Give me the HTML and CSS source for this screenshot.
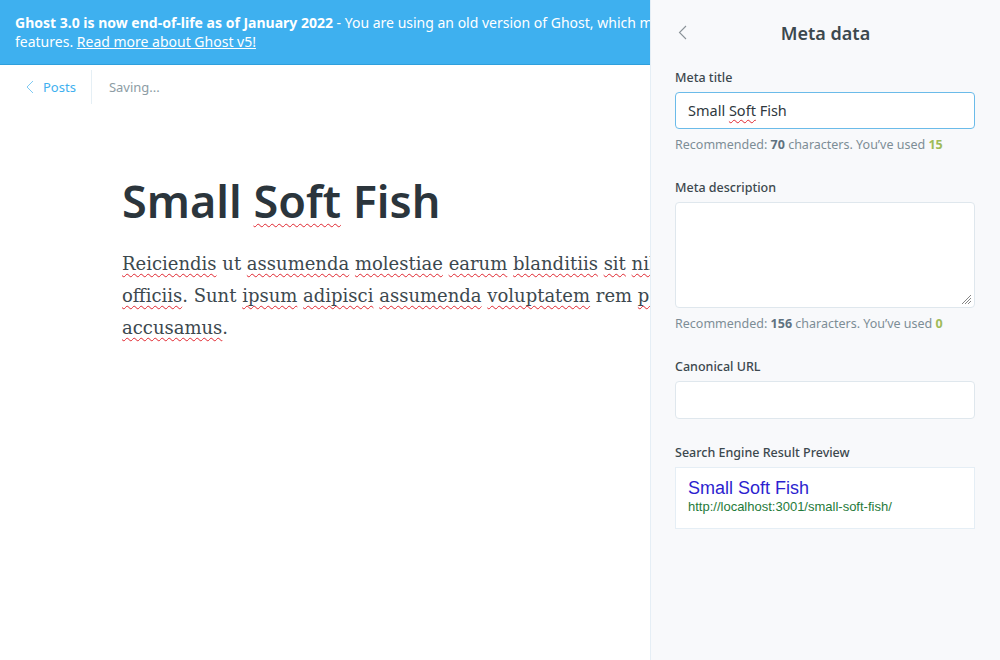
FILE: index.html
```html
<!DOCTYPE html>
<html>
<head>
<meta charset="utf-8">
<link rel="stylesheet" href="styles.css">
</head>
<body>
<div class="app">
  <div class="banner">
    <div class="banner-text">
      <strong>Ghost 3.0 is now end-of-life as of January 2022</strong> - You are using an old version of Ghost, which means<br>features. <a href="#">Read more about Ghost v5!</a>
    </div>
  </div>
  <div class="main">
    <div class="nav">
      <a class="back" href="#">
        <svg width="8" height="14" viewBox="0 0 8 14"><path d="M7 1 1 7l6 6" fill="none" stroke="currentColor" stroke-width="1"/></svg>
        Posts
      </a>
      <span class="status">Saving...</span>
    </div>
    <div class="editor">
      <h1 class="title">Small <span class="sp">Soft</span> Fish</h1>
      <p class="body"><span class="sp">Reiciendis</span> ut <span class="sp">assumenda</span> <span class="sp">molestiae</span> <span class="sp">earum</span> <span class="sp">blanditiis</span> <span class="sp">sit</span> <span class="sp">nihil</span><br><span class="sp">officiis</span>. Sunt <span class="sp">ipsum</span> <span class="sp">adipisci</span> <span class="sp">assumenda</span> <span class="sp">voluptatem</span> rem <span class="sp">perferendis</span><br><span class="sp">accusamus</span>.</p>
    </div>
  </div>

  <aside class="panel">
    <div class="panel-head">
      <button class="panel-back" type="button">
        <svg width="9" height="15" viewBox="0 0 9 15"><path d="M8 1 1.5 7.5 8 14" fill="none" stroke="currentColor" stroke-width="1.1"/></svg>
      </button>
      <h2>Meta data</h2>
    </div>
    <div class="panel-body">
      <div class="field">
        <label>Meta title</label>
        <div class="input focus">Small <span class="sp">Soft</span> Fish</div>
        <p class="help">Recommended: <b>70</b> characters. You’ve used <b class="ok">15</b></p>
      </div>
      <div class="field">
        <label>Meta description</label>
        <div class="input textarea">
          <svg class="grip" width="10" height="10" viewBox="0 0 10 10"><path d="M9 3 3 9M9 6 6 9M9 0 0 9" stroke="#666" stroke-width="0.8"/></svg>
        </div>
        <p class="help">Recommended: <b>156</b> characters. You’ve used <b class="ok">0</b></p>
      </div>
      <div class="field">
        <label>Canonical URL</label>
        <div class="input url"></div>
      </div>
      <div class="field">
        <label>Search Engine Result Preview</label>
        <div class="serp">
          <div class="serp-title">Small Soft Fish</div>
          <div class="serp-url">http://localhost:3001/small-soft-fish/</div>
        </div>
      </div>
    </div>
  </aside>
</div>
</body>
</html>
```
FILE: styles.css
```css
* { box-sizing: border-box; }
html, body { margin: 0; padding: 0; }
body {
  width: 1000px;
  height: 660px;
  overflow: hidden;
  background: #fff;
  font-family: "Noto Sans", "Open Sans", sans-serif;
  color: #3c484e;
}
.app { position: relative; width: 1000px; height: 660px; overflow: hidden; }

.sp {
  text-decoration: underline wavy #e0262f;
  text-decoration-thickness: 1px;
  text-underline-offset: 3px;
  text-decoration-skip-ink: none;
}

.banner {
  background: #3eb0ef;
  color: #fff;
  font-size: 14px;
  line-height: 19px;
  padding: 13px 15px 12px;
  height: 65px;
  border-bottom: 1px solid #2f9fdc;
}
.banner-text {
  width: 635px;
  overflow: hidden;
  white-space: nowrap;
}
.banner strong { font-weight: 700; }
.banner a { color: #fff; text-decoration: underline; }

.main { width: 650px; overflow: hidden; }

.nav {
  display: flex;
  align-items: center;
  height: 44px;
  padding: 5px 0 5px 26px;
}
.back {
  display: flex;
  align-items: center;
  gap: 9px;
  color: #3eb0ef;
  text-decoration: none;
  font-size: 13px;
  padding-right: 15px;
  height: 34px;
  border-right: 1px solid #e5eff5;
}
.back svg { color: #7fcaf3; }
.status {
  color: #8d9ca4;
  font-size: 13px;
  margin-left: 17px;
}

.editor { padding: 64px 0 0 122px; }
.title {
  margin: 0;
  font-size: 45px;
  line-height: 56px;
  font-weight: 600;
  color: #2b353c;
  white-space: nowrap;
}
.title .sp { text-underline-offset: 5px; }
.body {
  margin: 19px 0 0;
  font-family: "DejaVu Serif", Georgia, serif;
  font-size: 18px;
  line-height: 32px;
  color: #3c484e;
  white-space: nowrap;
}

.panel {
  position: absolute;
  top: 0;
  right: 0;
  width: 350px;
  height: 660px;
  background: #f8f9fb;
  border-left: 1px solid #e5eef5;
}
.panel-head {
  position: relative;
  display: flex;
  align-items: center;
  justify-content: center;
  height: 66px;
  margin-bottom: 3px;
}
.panel-head h2 {
  margin: 0;
  font-size: 18px;
  font-weight: 600;
  color: #3c484e;
}
.panel-back {
  position: absolute;
  left: 27px;
  top: 25px;
  border: 0;
  background: none;
  padding: 0;
  color: #8a9298;
  display: flex;
}
.panel-body { padding: 0 24px 0 24px; }
.field { margin-bottom: 25px; }
.field label {
  display: block;
  font-size: 12.5px;
  font-weight: 500;
  color: #3c484e;
  line-height: 18px;
  margin-bottom: 5px;
}
.input {
  position: relative;
  width: 300px;
  height: 37px;
  background: #fff;
  border: 1px solid #dfe7ed;
  border-radius: 4px;
  font-size: 14.5px;
  line-height: 35px;
  padding: 0 12px;
  color: #2f383e;
}
.input.focus { border-color: #6bbbe9; }
.input.textarea { height: 106px; }
.input.url { height: 38px; }
.grip { position: absolute; right: 2px; bottom: 2px; }
.help {
  margin: 7px 0 0;
  font-size: 12.5px;
  line-height: 18px;
  color: #7d8d96;
}
.help b { color: #5f7280; font-weight: 700; }
.help b.ok { color: #9fbb58; }
.serp {
  width: 300px;
  height: 62px;
  background: #fff;
  border: 1px solid #e5eef5;
  padding: 9px 12px;
  font-family: "Liberation Sans", Arial, sans-serif;
}
.serp-title { color: #2c1fcf; font-size: 18px; line-height: 22px; }
.serp-url { color: #1f7a3a; font-size: 13px; line-height: 16px; }
```
